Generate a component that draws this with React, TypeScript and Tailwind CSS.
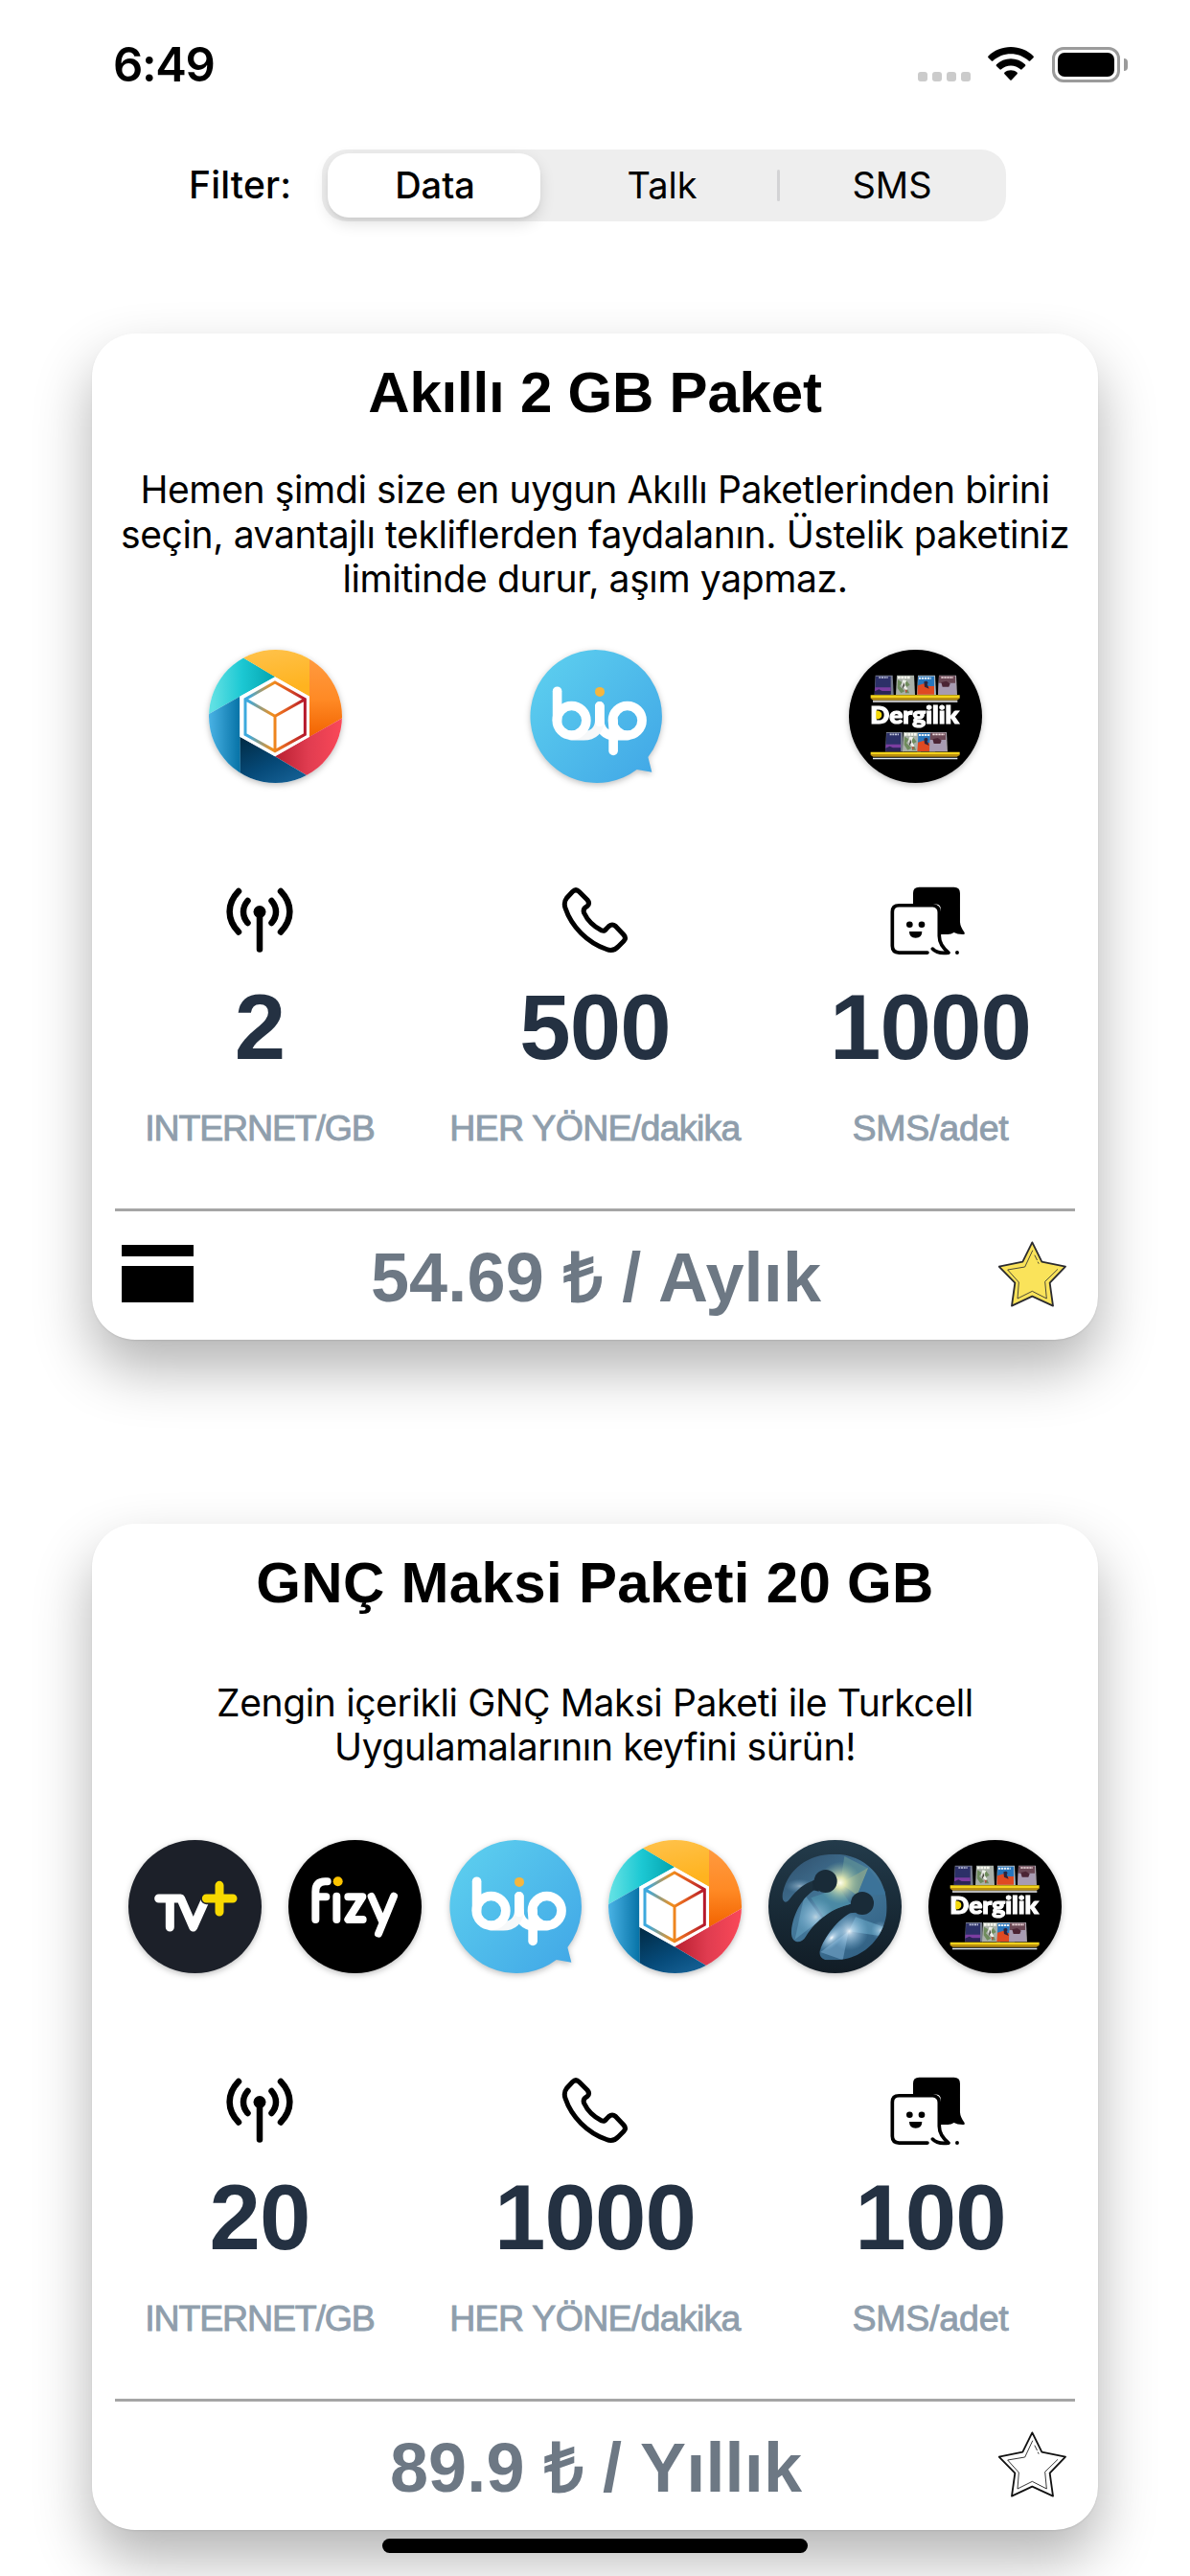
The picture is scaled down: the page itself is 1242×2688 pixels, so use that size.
import React from "react";

const SWISS = "font-['Liberation_Sans',Arial,sans-serif]";

function StatusBar() {
  return (
    <header className="flex h-[132px] items-start justify-between pt-[49px] pr-[65px] pl-[118px]">
      <span className="mt-[-10px] text-[49px] leading-[58px] font-semibold tracking-[-1.400px]">6:49</span>
      <div className="flex h-[37px]">
        <div className="mt-[26px] flex gap-[5px]">
          {[0, 1, 2, 3].map((i) => (
            <span key={i} className="h-[10px] w-[10px] rounded-[3px] bg-[#cbcbcb]" />
          ))}
        </div>
        <svg className="ml-[18px] h-[36px] w-[48px]" viewBox="0 0 48 36">
          <path d="M24 0C33 0 41.500 3.500 47.500 9.500Q48.300 10.300 47.500 11.200L44.200 14.500Q43.500 15.200 42.700 14.500C37.500 9.700 31 7.200 24 7.200S10.500 9.700 5.300 14.500Q4.500 15.200 3.800 14.500L0.500 11.200Q-0.300 10.300 0.500 9.500C6.500 3.500 15 0 24 0Z" />
          <path d="M24 12.300C29.700 12.300 35 14.500 39 18.300Q39.800 19.200 39 20L35.600 23.300Q34.900 24 34 23.300C31.300 20.900 27.800 19.500 24 19.500S16.700 20.900 14 23.300Q13.100 24 12.400 23.300L9 20Q8.200 19.200 9 18.300C13 14.500 18.300 12.300 24 12.300Z" />
          <path d="M24 24.300C26.400 24.300 28.700 25.100 30.500 26.500Q31.400 27.300 30.600 28.200L24.900 34.300Q24 35.300 23.100 34.300L17.400 28.200Q16.600 27.300 17.500 26.500C19.300 25.100 21.600 24.300 24 24.300Z" />
        </svg>
        <div className="ml-[19px] h-[37px] w-[71px] rounded-[12px] border-[3px] border-[#9b9b9b] p-[3px]">
          <div className="h-full w-full rounded-[7px] bg-black" />
        </div>
        <span className="mt-[12px] ml-[4px] h-[13px] w-[4px] rounded-r-full bg-[#9b9b9b]" />
      </div>
    </header>
  );
}

function FilterBar() {
  return (
    <div className="flex h-[75px] items-center pl-[197px] text-[39px] leading-[48px]">
      <span className="w-[139px] pb-[2px] font-medium tracking-[0.200px]">Filter:</span>
      <div className="flex h-[75px] w-[714px] items-center rounded-[26px] bg-[#eeeeee] px-[6px] text-center text-[38px]">
        <button className="h-[67px] w-[222px] rounded-[22px] bg-white pb-[2px] pl-[2px] font-medium shadow-[0_6px_16px_rgba(0,0,0,0.12),0_3px_3px_rgba(0,0,0,0.04)]">Data</button>
        <button className="h-[67px] w-[247px] pb-[2px] pl-[7px]">Talk</button>
        <span className="h-[33px] w-[3px] rounded-full bg-[#d3d3d5]" />
        <button className="h-[67px] flex-1 pb-[2px] pl-[4px]">SMS</button>
      </div>
    </div>
  );
}

const logoClass = "h-[139px] w-[139px] overflow-visible [filter:drop-shadow(0_2px_3px_rgba(0,0,0,0.25))]";

function BoxLogo({ id }: { id: string }) {
  const g = (n: string) => `${id}-${n}`;
  const u = (n: string) => `url(#${id}-${n})`;
  return (
    <svg className={logoClass} viewBox="83 83 417 417">
      <defs>
        <clipPath id={g("c")}><circle cx="291.500" cy="291.500" r="208.500" /></clipPath>
        <linearGradient id={g("teal")}><stop offset="0.150" stopColor="#5fe0e3" /><stop offset="0.550" stopColor="#1cc8d3" /><stop offset="1" stopColor="#03a3ae" /></linearGradient>
        <linearGradient id={g("yel")} x1="0" y1="0" x2="0.300" y2="1"><stop offset="0" stopColor="#ffc657" /><stop offset="1" stopColor="#ffb31f" /></linearGradient>
        <linearGradient id={g("org")} x1="0" y1="0" x2="0" y2="1"><stop offset="0" stopColor="#ffa04a" /><stop offset="0.600" stopColor="#ff8a25" /><stop offset="1" stopColor="#f26300" /></linearGradient>
        <linearGradient id={g("red")}><stop offset="0" stopColor="#b81f31" /><stop offset="0.450" stopColor="#e03c50" /><stop offset="1" stopColor="#ff4b5a" /></linearGradient>
        <linearGradient id={g("navy")} x1="0" y1="0" x2="0.800" y2="1"><stop offset="0" stopColor="#012a43" /><stop offset="0.500" stopColor="#064a79" /><stop offset="1" stopColor="#1d6ca3" /></linearGradient>
        <linearGradient id={g("blue")}><stop offset="0.150" stopColor="#4db6e8" /><stop offset="1" stopColor="#0672a6" /></linearGradient>
        <linearGradient id={g("line")} gradientUnits="userSpaceOnUse" x1="197" y1="0" x2="384" y2="0"><stop offset="0.060" stopColor="#3da9dd" /><stop offset="0.450" stopColor="#f0901d" /><stop offset="0.600" stopColor="#ea6d20" /><stop offset="1" stopColor="#b5172b" /></linearGradient>
      </defs>
      <g clipPath={u("c")}>
        <rect x="83" y="83" width="417" height="417" fill="#fff" />
        <path d="M190 108L291 168L180 229L83 284L60 297V70H150Z" fill={u("teal")} />
        <path d="M190 108L290 168L399 230V60H110Z" fill={u("yel")} />
        <path d="M398 60V356L520 286V60Z" fill={u("org")} />
        <path d="M398 355L290 417L388 475L460 520H520V286Z" fill={u("red")} />
        <path d="M290 417L180 355V520H464L388 475Z" fill={u("navy")} />
        <path d="M180 229L60 297V480L181 490Z" fill={u("blue")} />
        <path d="M290 168L398 229V355L290 417L180 355V229Z" fill="#fff" />
        <path d="M290 185L384 238V348L290 400L197 348V238ZM197 238L290 291L384 238M290 291V400" fill="none" stroke={u("line")} strokeWidth="9" />
      </g>
    </svg>
  );
}

function BipLogo({ id }: { id: string }) {
  return (
    <svg className={logoClass} viewBox="66 83 418 418">
      <defs>
        <linearGradient id={id} x1="0.100" y1="0.200" x2="0.900" y2="0.900"><stop offset="0" stopColor="#5acbee" /><stop offset="1" stopColor="#43aae7" /></linearGradient>
      </defs>
      <path d="M275 83A209 209 0 0 1 440 420L452 467L405 459A209 209 0 1 1 275 83Z" fill={`url(#${id})`} />
      <g fill="none" stroke="#fff" strokeWidth="29" strokeLinecap="round">
        <path d="M288 305C288 334 308 353 333 353H375" />
        <circle cx="375" cy="305" r="46" />
        <path d="M331 305V400" />
        <path d="M200 353H238C268 353 288 334 288 305V260" stroke="#f6f8f9" />
        <path d="M288 310V260" />
        <path d="M155 213V305" />
        <circle cx="200" cy="305" r="46" />
      </g>
      <circle cx="288.500" cy="215" r="15" fill="#f5b63e" />
    </svg>
  );
}

function Books({ y, xs, w }: { y: number; xs: number[]; w: number }) {
  return (
    <g>
      {xs.map((x, i) => (
        <g key={x} transform={`translate(${x} ${y})`}>
          <path d={`M3 0H${w - 3}L${w} 61H0Z`} fill={["#747a8c", "#a9b0a8", "#a8b3bb", "#a79fa9"][i]} />
          {i === 0 && (
            <>
              <path d={`M4 3H${w - 9}V59H1Z`} fill="#2c3068" />
              <path d={`M2 38H${w - 9}V50H1Z`} fill="#7b3da0" />
              <path d={`M1 50L14 44L24 49H${w - 9}V60H1Z`} fill="#2a2456" />
              <path d="M14 7H42" stroke="#c3c7dc" strokeWidth="5" strokeDasharray="6 2" />
            </>
          )}
          {i === 1 && (
            <>
              <path d="M6 14L20 22L12 34L28 50L16 56L5 40ZM30 12L44 30L34 36L42 56H30Z" fill="#6f8c5d" />
              <path d="M22 14L34 16L28 28L38 44L30 46L18 30Z" fill="#eef0ea" />
              <path d="M24 22L28 32L20 44Z" fill="#43413b" />
              <path d="M6 7H44" stroke="#f7f7ef" strokeWidth="8" strokeDasharray="8 2" />
              <path d="M28 44L36 48L32 56Z" fill="#b84e3d" />
            </>
          )}
          {i === 2 && (
            <>
              <path d={`M4 3H${w - 6}V35H3Z`} fill="#2876bd" />
              <path d={`M3 32L22 26L34 34H${w - 6}V60H1Z`} fill="#df4a22" />
              <path d="M22 20C32 14 38 22 32 28L38 42L24 36Z" fill="#30233a" />
              <path d="M6 9H44" stroke="#e9eff4" strokeWidth="6" strokeDasharray="7 2" />
            </>
          )}
          {i === 3 && (
            <>
              <path d={`M3 2H${w - 6}V26H2Z`} fill="#6b4855" />
              <path d={`M2 24H${w - 6}V60H1Z`} fill="#a79bb2" />
              <path d="M10 22L26 18L38 26L34 36H14Z" fill="#4b2434" />
              <path d="M10 7H48" stroke="#f2dfe2" strokeWidth="5" strokeDasharray="7 2" />
            </>
          )}
        </g>
      ))}
    </g>
  );
}

function DergilikLogo({ id }: { id: string }) {
  return (
    <svg className={logoClass} viewBox="78 82 417 417">
      <defs>
        <linearGradient id={id} x1="0" y1="0" x2="0" y2="1"><stop offset="0.500" stopColor="#f3d31b" /><stop offset="0.550" stopColor="#b98f12" /></linearGradient>
      </defs>
      <circle cx="286.500" cy="290.500" r="208.500" fill="#000" />
      <Books y={162} xs={[158, 225, 291, 357]} w={60} />
      <path d="M146 224H425V234L416 240H154L146 234Z" fill={`url(#${id})`} />
      <path d="M153 240H418V247H153Z" fill="#b9b9bb" />
      <text x="145" y="312" textLength="278" lengthAdjust="spacingAndGlyphs" fontSize="75" fontWeight="900" fill="#fff" stroke="#fff" strokeWidth="3.500" className="font-[Lato,Inter,sans-serif]">Dergilik</text>
      <path d="M163 273C187 268 187 304 163 299Z" fill="#f5d90a" />
      <Books y={340} xs={[192, 246, 291, 330]} w={57} />
      <path d="M146 402H425V412L416 417H154L146 412Z" fill={`url(#${id})`} />
      <path d="M153 420H418V425H153Z" fill="#dfe9f2" />
    </svg>
  );
}

function TvPlusLogo() {
  return (
    <svg className={logoClass} viewBox="73 88 417 417">
      <circle cx="281.500" cy="296.500" r="208.500" fill="#1c2029" />
      <g fill="none" strokeWidth="27" strokeLinecap="round" strokeLinejoin="round">
        <path d="M168 271H237L276 361L313 278M203 271V361" stroke="#fff" />
        <path d="M317 271H400M358 230V313" stroke="#1c2029" strokeWidth="37" />
        <path d="M317 271H400M358 230V313" stroke="#f8d900" />
      </g>
    </svg>
  );
}

function FizyLogo() {
  return (
    <svg className={logoClass} viewBox="575 88 417 417">
      <circle cx="783.500" cy="296.500" r="208.500" fill="#000" />
      <g fill="none" stroke="#fff" strokeWidth="24" strokeLinecap="round" strokeLinejoin="round">
        <path d="M660 337V250Q660 218 690 218H697M662 266H693" />
        <path d="M726 264V337M762 266H807L762 337H808" />
        <path d="M835 265L870 345M905 264L857 381" />
      </g>
      <circle cx="730" cy="218" r="15" fill="#fdc400" />
    </svg>
  );
}

function TurkcellLogo() {
  return (
    <svg className={logoClass} viewBox="67 89 417 417">
      <defs>
        <linearGradient id="tc-bg" x1="0" y1="0" x2="0" y2="1"><stop offset="0" stopColor="#233b4b" /><stop offset="0.600" stopColor="#172834" /><stop offset="1" stopColor="#111c25" /></linearGradient>
        <linearGradient id="tc-lit" x1="0" y1="0" x2="0.700" y2="1"><stop offset="0" stopColor="#2c4a66" /><stop offset="0.500" stopColor="#45799b" /><stop offset="1" stopColor="#316083" /></linearGradient>
        <radialGradient id="tc-white"><stop offset="0" stopColor="#fff" /><stop offset="0.200" stopColor="#d9efff" stopOpacity="0.750" /><stop offset="1" stopColor="#8cc5ea" stopOpacity="0" /></radialGradient>
        <radialGradient id="tc-gold"><stop offset="0" stopColor="#fffef0" /><stop offset="0.250" stopColor="#eef0b5" stopOpacity="0.900" /><stop offset="1" stopColor="#89b7a1" stopOpacity="0" /></radialGradient>
        <clipPath id="tc-clip"><path d="M120 283C110 280 108 265 113 250C130 180 190 133 274 133C370 133 438 205 438 299C438 390 365 465 274 465H250C232 463 226 450 228 437C240 395 285 335 330 314L325 290C270 300 215 340 185 390Q175 408 158 408C145 406 138 395 139 375C143 325 170 270 215 243L210 215C180 225 155 245 135 272Q128 283 120 283Z" /></clipPath>
      </defs>
      <circle cx="275.500" cy="297.500" r="208.500" fill="url(#tc-bg)" />
      <g clipPath="url(#tc-clip)">
        <rect x="100" y="125" width="350" height="350" fill="url(#tc-lit)" />
        <path d="M292 225L305 140L380 178Z" fill="#5f9296" opacity="0.700" />
        <path d="M292 225L380 176L345 262Z" fill="#9fb68b" opacity="0.600" />
        <path d="M380 176L440 260L345 262Z" fill="#3c7399" />
        <path d="M340 330L440 365L420 390L318 375Z" fill="#67a6c7" opacity="0.600" />
        <path d="M180 260L235 335L150 400Z" fill="#6aa5c4" opacity="0.550" />
        <path d="M200 270L290 240L325 290L240 330Z" fill="#4f91a9" opacity="0.700" />
        <path d="M318 375L300 465L230 440Z" fill="#82b4d8" opacity="0.500" />
        <ellipse cx="165" cy="233" rx="45" ry="22" fill="url(#tc-white)" opacity="0.450" />
        <circle cx="292" cy="223" r="66" fill="url(#tc-gold)" />
        <circle cx="215" cy="330" r="60" fill="url(#tc-white)" opacity="0.600" />
        <circle cx="320" cy="375" r="60" fill="url(#tc-white)" opacity="0.900" />
        <ellipse cx="265" cy="395" rx="50" ry="28" transform="rotate(-45 265 395)" fill="url(#tc-white)" />
        <circle cx="418" cy="372" r="30" fill="url(#tc-white)" opacity="0.600" />
      </g>
      <g fill="#192b38">
        <path d="M205 218L225 205V250L207 246Z" />
        <circle cx="246" cy="218" r="36" />
        <path d="M318 292L340 282V316L322 318Z" />
        <circle cx="361" cy="287" r="36" />
      </g>
    </svg>
  );
}

function AntennaIcon() {
  return (
    <svg className="h-[70px] w-[70px]" viewBox="0 0 70 70" fill="none" stroke="#000" strokeWidth="6.500" strokeLinecap="round">
      <path d="M13 5C0.500 18 0.500 34.500 13 47.500M57 5C69.500 18 69.500 34.500 57 47.500" />
      <path d="M22.500 15C16.500 22 16.500 31 22.500 38M47.500 15C53.500 22 53.500 31 47.500 38" />
      <path d="M35 28V65.500" />
      <circle cx="35" cy="26.500" r="6.500" fill="#000" stroke="none" />
    </svg>
  );
}

function PhoneIcon() {
  return (
    <svg className="h-[70px] w-[70px]" viewBox="0 0 70 70" fill="none" stroke="#000" strokeWidth="5" strokeLinejoin="round">
      <path d="M11.500 5.500Q15 2 18.500 5.500L27 14Q30 17.500 27 20.500Q22 23 23.500 27.500C27 35 34 42 42 46Q45 47 47 44L49.500 41.500Q53 38.500 56.500 41.500L65 50.500Q68 54 65 57L59.500 62.500Q54 68.500 47 65.500C27 58.500 10.500 42 4 22.500Q2 16.500 5.500 12Z" />
    </svg>
  );
}

function StickerIcon() {
  return (
    <svg className="h-[71.500px] w-[83.300px]" viewBox="58 57 250 214">
      <path d="M130 112V78Q130 59 149 59H258Q277 59 277 78V168Q278 184 290 199Q295 207 285 207Q268 207 258 201Q248 208 236 207H216V122Q212 112 202 112Z" />
      <path d="M175 264H86Q65 264 65 243V136Q65 116 86 116H192Q212 118 212 138V212C212 236 224 250 241 264C220 267 200 262 191 252" fill="none" stroke="#000" strokeWidth="11" strokeLinecap="round" strokeLinejoin="round" />
      <circle cx="119" cy="176" r="10" />
      <circle cx="157" cy="176" r="10" />
      <path d="M118 198H158Q158 218 138 218T118 198Z" />
      <circle cx="268" cy="264" r="6" />
    </svg>
  );
}

function StarIcon({ filled }: { filled: boolean }) {
  return (
    <svg className="h-[69px] w-[71px]" viewBox="36 43 213 207" fill="none" stroke={filled ? "#2b2b2f" : "#111"} strokeLinejoin="round" strokeLinecap="round">
      <path d="M142 47L172 108L246 123L197 174L207 246L142 216L78 246L88 174L38 123L112 108Z" fill={filled ? "#fae35a" : "#fff"} strokeWidth="5.500" />
      <path d="M143 73L119 124L65 133L100 172L96 223L142 200L187 223L182 170L221 132M150 88L157 102M160 109L162 113" strokeWidth="2.500" />
    </svg>
  );
}

const stats = [
  { label: "INTERNET/GB", icon: <AntennaIcon />, track: "tracking-[-1.150px]" },
  { label: "HER YÖNE/dakika", icon: <PhoneIcon />, track: "tracking-[-0.700px]" },
  { label: "SMS/adet", icon: <StickerIcon />, track: "tracking-[-0.200px]" },
];

type PackageProps = {
  title: string;
  titleTrack: string;
  lines: string[];
  logos: React.ReactNode[];
  values: string[];
  price: string;
  favorite?: boolean;
  carded?: boolean;
};

function PackageCard({ title, titleTrack, lines, logos, values, price, favorite = false, carded = false }: PackageProps) {
  return (
    <section className="flex h-[1050px] w-[1050px] flex-col rounded-[45px] bg-white shadow-[0_30px_60px_rgba(0,0,0,0.3),0_1px_2px_rgba(0,0,0,0.08)]">
      <h2 className={`mt-[26px] h-[72px] text-center text-[60px] leading-[72px] font-bold whitespace-nowrap ${titleTrack} ${SWISS}`}>{title}</h2>
      <div className="mt-[42px] flex h-[140px] flex-col justify-center text-center text-[39px] leading-[46.500px] tracking-[-0.370px] whitespace-nowrap">
        {lines.map((line) => (
          <p key={line}>{line}</p>
        ))}
      </div>
      <div className="mx-[24px] mt-[50px] flex h-[139px]">
        {logos.map((logo, i) => (
          <div key={i} className="flex flex-1 justify-center">{logo}</div>
        ))}
      </div>
      <div className={`mt-[108px] grid grid-cols-3 text-center ${SWISS}`}>
        {stats.map((s, i) => (
          <div key={s.label} className="flex flex-col items-center">
            <div className="h-[72px]">{s.icon}</div>
            <div className="mt-[19px] h-[112px] text-[96px] leading-[112px] font-bold tracking-[-0.900px] text-[#243142]">{values[i]}</div>
            <div className={`mt-[26px] h-[46px] text-[37.500px] leading-[46px] whitespace-nowrap text-[#8f9eac] [-webkit-text-stroke:0.900px_#8f9eac] ${s.track}`}>{s.label}</div>
          </div>
        ))}
      </div>
      <div className="mx-[24px] mt-[61px] h-[3px] bg-[#a5a5a5]" />
      <div className="mr-[33px] ml-[31px] flex items-start justify-between pt-[27px]">
        <div className="mt-[8px] flex h-[60px] w-[75px] flex-col gap-[10px]">
          {carded && (
            <>
              <div className="h-[12px] bg-black" />
              <div className="flex-1 bg-black" />
            </>
          )}
        </div>
        <div className={`h-[84px] text-[72px] leading-[84px] font-bold tracking-[0.150px] whitespace-nowrap text-[#6d7884] ${SWISS}`}>{price}</div>
        <div className="mt-[4px]"><StarIcon filled={favorite} /></div>
      </div>
    </section>
  );
}

export default function App() {
  return (
    <main className="relative h-[2688px] w-[1242px] overflow-hidden bg-white font-[Inter,sans-serif] text-black">
      <StatusBar />
      <div className="mt-[24px]">
        <FilterBar />
      </div>
      <div className="mt-[117px] flex flex-col items-center gap-[192px]">
        <PackageCard
          title="Akıllı 2 GB Paket"
          titleTrack="tracking-[-0.200px]"
          lines={[
            "Hemen şimdi size en uygun Akıllı Paketlerinden birini",
            "seçin, avantajlı tekliflerden faydalanın. Üstelik paketiniz",
            "limitinde durur, aşım yapmaz.",
          ]}
          logos={[<BoxLogo id="box-a" />, <BipLogo id="bip-a" />, <DergilikLogo id="der-a" />]}
          values={["2", "500", "1000"]}
          price="54.69 ₺ / Aylık"
          favorite
          carded
        />
        <PackageCard
          title="GNÇ Maksi Paketi 20 GB"
          titleTrack="tracking-[0.330px]"
          lines={["Zengin içerikli GNÇ Maksi Paketi ile Turkcell", "Uygulamalarının keyfini sürün!"]}
          logos={[<TvPlusLogo />, <FizyLogo />, <BipLogo id="bip-b" />, <BoxLogo id="box-b" />, <TurkcellLogo />, <DergilikLogo id="der-b" />]}
          values={["20", "1000", "100"]}
          price="89.9 ₺ / Yıllık"
        />
      </div>
      <div className="absolute bottom-[24px] left-[399px] h-[15px] w-[444px] rounded-full bg-black" />
    </main>
  );
}
